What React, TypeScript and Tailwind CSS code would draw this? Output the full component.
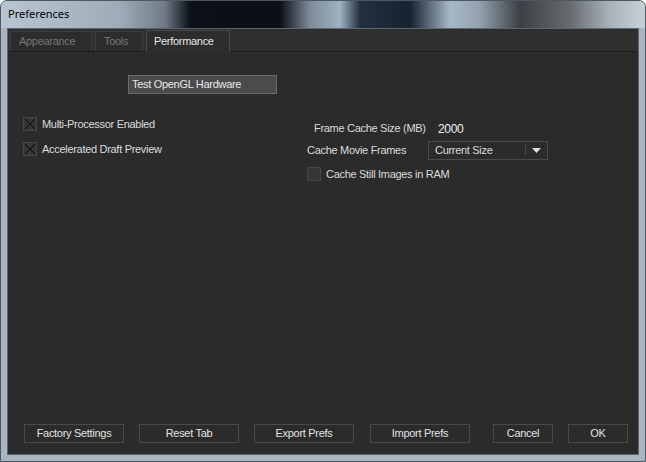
import React from 'react';

function Check({ checked, label }: { checked: boolean; label: string }) {
  return (
    <div className="flex h-[20px] items-center gap-[5px]">
      <div className="flex h-[14px] w-[14px] items-center justify-center border border-[#474747] bg-[#363636]">
        {checked && (
          <svg viewBox="0 0 12 12" className="h-[12px] w-[12px]">
            <path d="M1 1 L11 11 M11 1 L1 11" stroke="#161616" strokeWidth="1.1" />
          </svg>
        )}
      </div>
      <span>{label}</span>
    </div>
  );
}

function Btn({ label, w }: { label: string; w: string }) {
  return (
    <button className={`${w} h-[19px] border border-[#4a4a4a] bg-[#2b2b2b] text-center leading-[17px] text-[#e2e2e2]`}>
      {label}
    </button>
  );
}

export default function App() {
  const tabs = [
    { name: 'Appearance', w: 'w-[82px]' },
    { name: 'Tools', w: 'w-[48px]' },
  ];

  return (
    <div
      className="flex h-[462px] w-[646px] flex-col overflow-hidden rounded-t-[7px] border border-[#4d5863] bg-[#a9b6c1] text-[11px] tracking-[-0.3px] text-[#dcdcdc]"
      style={{ fontFamily: '"Liberation Sans", Arial, sans-serif' }}
    >
      {/* title bar */}
      <div
        className="-mx-px -mt-px flex h-[28px] shrink-0 items-center bg-[linear-gradient(90deg,#b9c6d1_0px,#9eacb9_120px,#6f7a85_165px,#0b1019_190px,#0b0f17_280px,#7e8c99_310px,#9fb1c2_340px,#23303f_360px,#182230_410px,#a7b8c8_450px,#93a1ad_480px,#3c4045_520px,#676b70_570px,#a8b3bc_610px,#c8d1d8_646px)] pl-[8px] text-[11px] tracking-normal text-black"
        style={{ fontFamily: '"Noto Sans", "Liberation Sans", sans-serif' }}
      >
        Preferences
      </div>

      <div className="mx-[6px] mb-[6px] flex flex-1 flex-col border border-[#5b6670] bg-[#2b2b2b]">
        {/* tabs */}
        <div className="flex h-[23px] items-end gap-[3px] border-b border-[#1c1c1c] bg-[#2f2f2f] pl-[2px]">
          {tabs.map((t) => (
            <div
              key={t.name}
              className={`${t.w} flex h-[20px] items-center border border-b-0 border-[#3d3d3d] bg-[#2c2c2c] pl-[8px] text-[#767676]`}
            >
              {t.name}
            </div>
          ))}
          <div className="mb-[-1px] flex h-[22px] w-[84px] items-center border border-b-0 border-[#4a4a4a] bg-[#2d2d2d] pl-[7px] text-[#e6e6e6]">
            Performance
          </div>
        </div>

        {/* body */}
        <div className="flex flex-1 flex-col">
          <div className="ml-[120px] mt-[23px] flex h-[19px] w-[149px] items-center border border-[#6a6a6a] bg-[#4b4b4b] pl-[3px] text-[#e8e8e8]">
            Test OpenGL Hardware
          </div>

          <div className="mt-[20px] flex items-start">
            <div className="ml-[15px] flex w-[284px] flex-col gap-[5px]">
              <Check checked label="Multi-Processor Enabled" />
              <Check checked label="Accelerated Draft Preview" />
            </div>

            <div className="mt-[4px] flex flex-col gap-[2px]">
              <div className="flex h-[20px] items-center pl-[7px]">
                <span className="w-[124px]">Frame Cache Size (MB)</span>
                <span className="pt-[2px] text-[12px] text-[#f0f0f0]">2000</span>
              </div>
              <div className="flex h-[20px] items-center">
                <span className="w-[121px]">Cache Movie Frames</span>
                <div className="flex h-[19px] w-[120px] items-center border border-[#4a4a4a] bg-[#2b2b2b] pl-[6px]">
                  <span className="flex-1">Current Size</span>
                  <div className="h-[10px] w-px bg-[#4a4a4a]" />
                  <svg viewBox="0 0 9 5" className="mx-[6px] h-[5px] w-[9px]">
                    <path d="M0 0 H9 L4.5 5 Z" fill="#e0e0e0" />
                  </svg>
                </div>
              </div>
              <div className="mt-[2px]">
                <Check checked={false} label="Cache Still Images in RAM" />
              </div>
            </div>
          </div>

          {/* bottom buttons */}
          <div className="mb-[11px] mt-auto flex pl-[16px]">
            <Btn label="Factory Settings" w="w-[100px]" />
            <div className="w-[15px]" />
            <Btn label="Reset Tab" w="w-[100px]" />
            <div className="w-[15px]" />
            <Btn label="Export Prefs" w="w-[100px]" />
            <div className="w-[16px]" />
            <Btn label="Import Prefs" w="w-[100px]" />
            <div className="w-[23px]" />
            <Btn label="Cancel" w="w-[60px]" />
            <div className="w-[15px]" />
            <Btn label="OK" w="w-[60px]" />
          </div>
        </div>
      </div>
    </div>
  );
}
